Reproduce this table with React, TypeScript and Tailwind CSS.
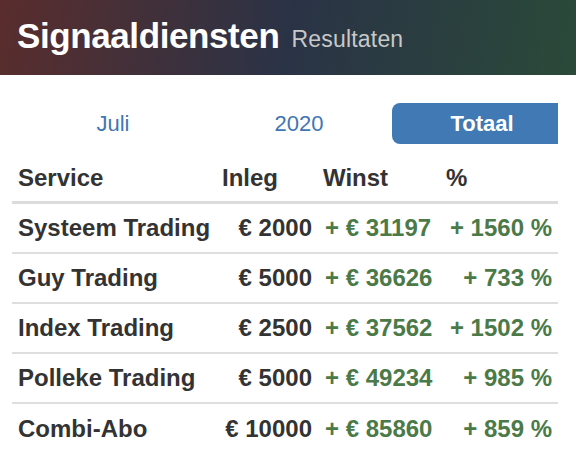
const rows = [
  { name: "Systeem Trading", inleg: "€ 2000", winst: "+ € 31197", pct: "+ 1560 %" },
  { name: "Guy Trading", inleg: "€ 5000", winst: "+ € 36626", pct: "+ 733 %" },
  { name: "Index Trading", inleg: "€ 2500", winst: "+ € 37562", pct: "+ 1502 %" },
  { name: "Polleke Trading", inleg: "€ 5000", winst: "+ € 49234", pct: "+ 985 %" },
  { name: "Combi-Abo", inleg: "€ 10000", winst: "+ € 85860", pct: "+ 859 %" },
];

const App = () => {
  return (
    <div className="w-[576px] h-[454px] overflow-hidden bg-white font-['Liberation_Sans',Arial,sans-serif]">
      <header className="h-[75px] flex items-center gap-3 px-[17px] pb-[2px] bg-[linear-gradient(100deg,#5a2d2d_0%,#2a3346_50%,#2a4a39_100%)]">
        <h1 className="text-[35px] font-bold text-white tracking-[-0.4px]">Signaaldiensten</h1>
        <span className="text-[23px] text-[#c8c8c8] mt-[6px] tracking-[0.2px]">Resultaten</span>
      </header>

      <div className="ml-[12px] w-[546px] overflow-hidden">
        <nav className="mt-[28px] w-[570px] grid grid-cols-[194px_186px_190px] h-[41px] items-stretch">
          <button className="text-[22px] text-[#3f76b3] pl-[8px]">Juli</button>
          <button className="text-[22px] text-[#3f76b3]">2020</button>
          <button className="text-[22px] font-bold text-white bg-[#4179b4] rounded-l-[8px] pr-[10px]">Totaal</button>
        </nav>

        <div className="mt-[11px] text-[#333] font-bold text-[24px]">
          <div className="grid grid-cols-[210px_90px_122px_124px] h-[49px] items-center border-b-[3px] border-[#dcdcdc]">
            <span className="pl-[6px]">Service</span>
            <span className="pl-[0px]">Inleg</span>
            <span className="pl-[11px]">Winst</span>
            <span className="pl-[12px]">%</span>
          </div>
          {rows.map((r, i) => (
            <div
              key={r.name}
              className={`grid grid-cols-[210px_90px_122px_124px] h-[50px] items-center ${i < rows.length - 1 ? "border-b-2 border-[#dedede]" : ""}`}
            >
              <span className="pl-[6px]">{r.name}</span>
              <span className="text-right">{r.inleg}</span>
              <span className="pl-[13px] text-[#4b7a48]">{r.winst}</span>
              <span className="text-right pr-[6px] text-[#4b7a48]">{r.pct}</span>
            </div>
          ))}
        </div>
      </div>
    </div>
  );
};

export default App;
